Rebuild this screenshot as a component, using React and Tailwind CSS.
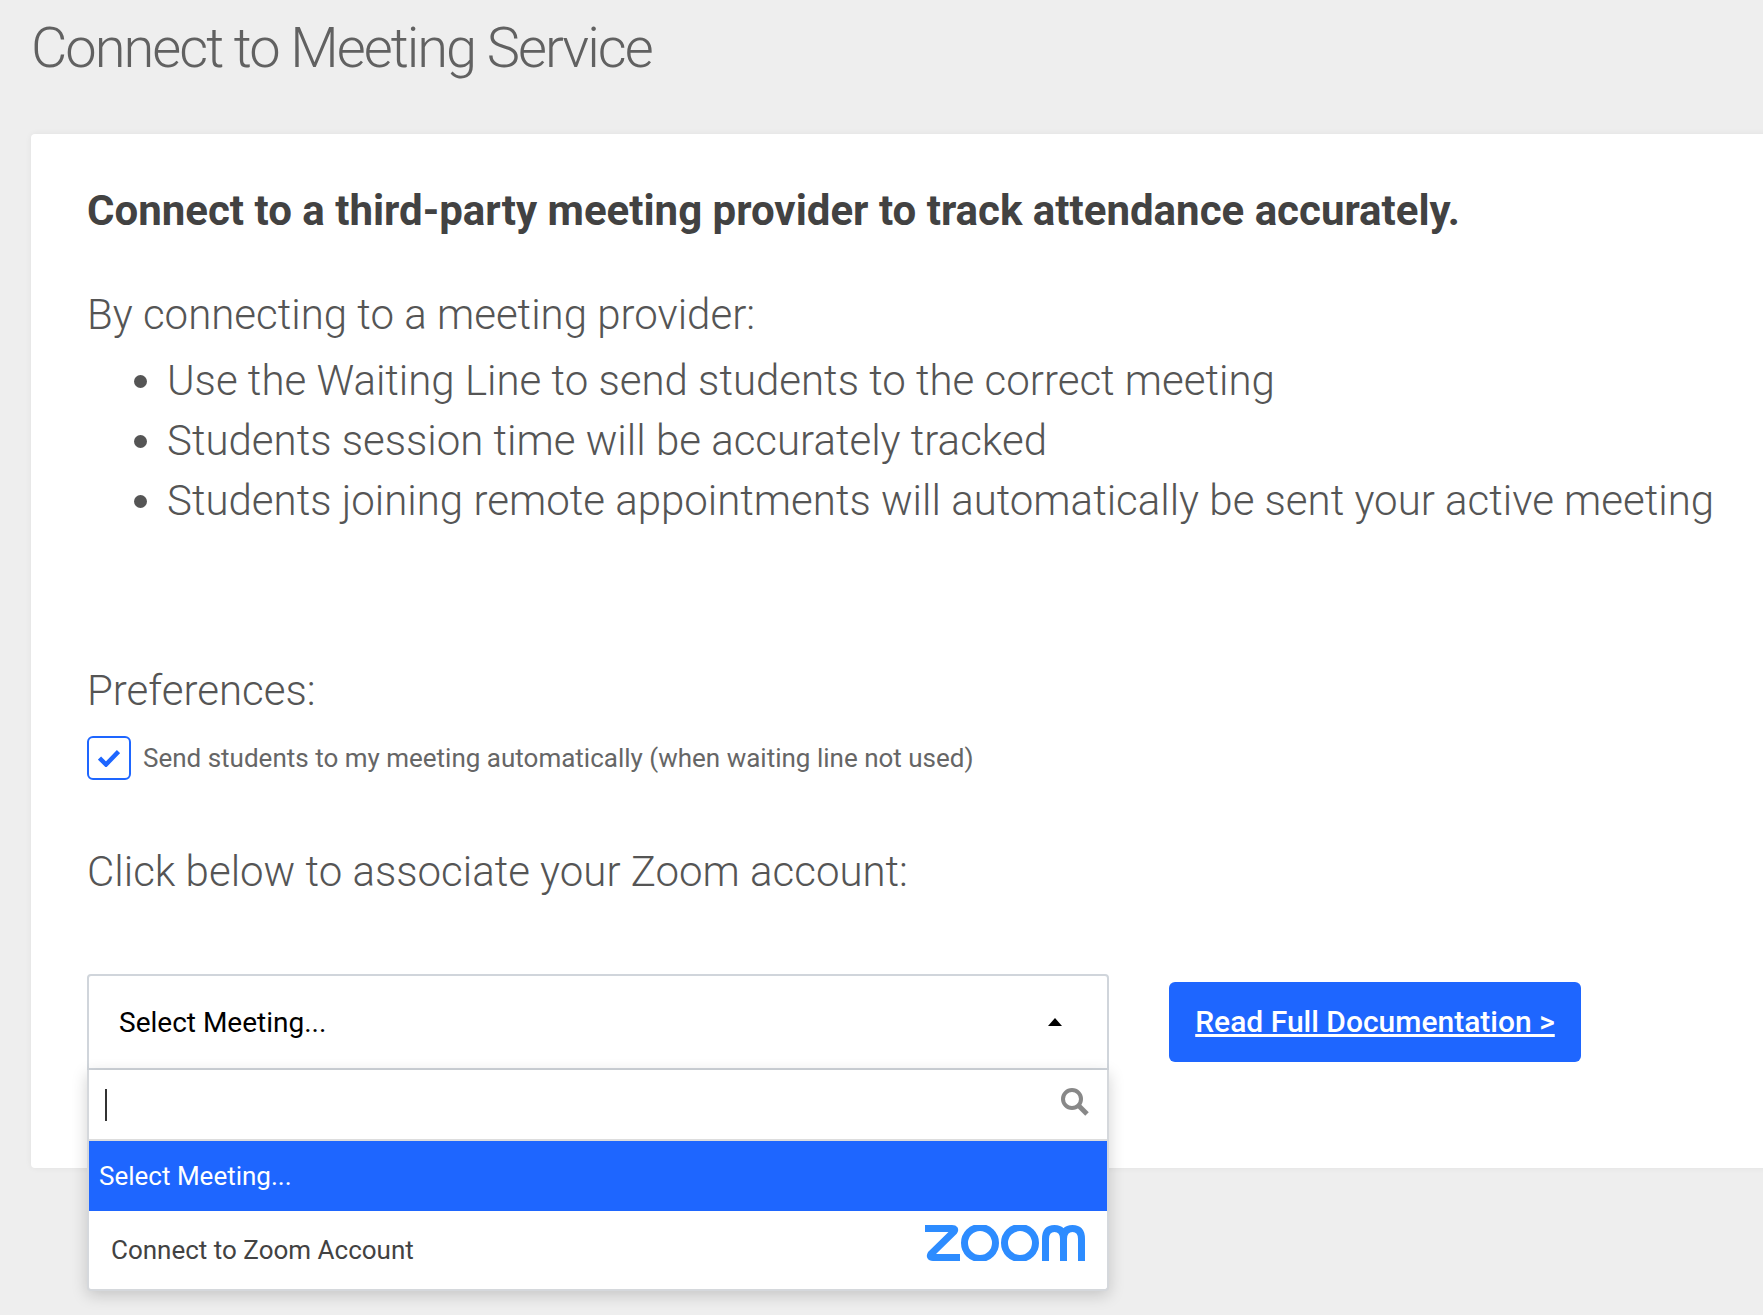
export default function App() {
  const items = [
    "Use the Waiting Line to send students to the correct meeting",
    "Students session time will be accurately tracked",
    "Students joining remote appointments will automatically be sent your active meeting",
  ];
  return (
    <div className="h-[1315px] w-full overflow-hidden bg-[#eeeeee] font-['Roboto',sans-serif] pl-[31px]">
      <h1 className="m-0 h-[134px] pt-[14px] text-[56px] leading-[68px] font-light tracking-[-2px] text-[#616161]">Connect to Meeting Service</h1>
      <div className="relative h-[1034px] w-[1800px] rounded-l-[4px] bg-white pl-14 pt-[52px] shadow-[0_0_6px_rgba(0,0,0,0.06)]">
        <h2 className="m-0 text-[42px] leading-[50px] font-bold text-[#424242]">Connect to a third-party meeting provider to track attendance accurately.</h2>
        <p className="mt-[49px] text-[42px] leading-[60px] font-light text-[#555555]">By connecting to a meeting provider:</p>
        <ul className="m-0 mt-[6px] list-disc pl-20 text-[42px] leading-[60px] font-light text-[#555555]">
          {items.map((t) => (<li key={t}>{t}</li>))}
        </ul>
        <p className="mt-[130px] text-[42px] leading-[60px] font-light text-[#555555]">Preferences:</p>
        <div className="mt-[15px] flex items-center gap-3">
          <span className="flex h-11 w-11 items-center justify-center rounded-[6px] border-2 border-[#1e66ff]">
            <svg width="22" height="18" viewBox="0 0 22 18" fill="none">
              <path d="M1.500 9l6.500 6.500L20.500 2.500" stroke="#1e66ff" strokeWidth="4.500" />
            </svg>
          </span>
          <span className="text-[26px] leading-[36px] text-[#666666]">Send students to my meeting automatically (when waiting line not used)</span>
        </div>
        <p className="mt-[62px] text-[42px] leading-[60px] font-light text-[#555555]">Click below to associate your Zoom account:</p>
        <div className="mt-[72px] flex items-start gap-[60px]">
          <div className="relative w-[1022px]">
            <div className="flex h-[96px] items-center justify-between rounded-t-[4px] border-2 border-[#d0d5db] bg-white pl-[30px] pr-[45px] text-[28px] text-black">
              <span className="mt-[2px]">Select Meeting...</span>
              <span className="h-0 w-0 border-x-[7px] border-b-[8px] border-x-transparent border-b-black" />
            </div>
            <div className="absolute left-0 top-[96px] z-10 w-full rounded-b-[4px] border-x-2 border-b-2 border-[#d5d8dc] bg-white shadow-[0_4px_16px_rgba(0,0,0,0.18)]">
              <div className="flex h-[71px] items-center justify-between border-b-2 border-[#dddddd] pl-4 pr-[18px]">
                <span className="h-8 w-[2px] bg-[#333333]" />
                <svg className="mb-[5px]" width="28" height="28" viewBox="0 0 28 28" fill="none">
                  <circle cx="11" cy="11" r="9" stroke="#888888" strokeWidth="4" />
                  <path d="M18 18l8 8" stroke="#888888" strokeWidth="5" />
                </svg>
              </div>
              <div className="flex h-[70px] items-center bg-[#1e66ff] pl-[10px] text-[26px] text-white">Select Meeting...</div>
              <div className="flex h-[78px] items-start justify-between pl-[22px] pr-[22px] text-[26px] text-[#424242]">
                <span className="mt-[20px]">Connect to Zoom Account</span>
                <svg className="mt-[14px]" width="160" height="36" viewBox="0 0 160 36" fill="none">
                  <g stroke="#2d8cff" strokeWidth="7">
                    <path d="M0 3.500h27q4 0 2 3L6 29q-2 3.500 2 3.500h27" strokeLinejoin="round" />
                    <circle cx="55" cy="18" r="15.500" />
                    <circle cx="95" cy="18" r="15.500" />
                    <path d="M120.500 36V14q0-10.500 9-10.500t9 10.500v22M138.500 14q0-10.500 9-10.500t9 10.500v22" />
                  </g>
                </svg>
              </div>
            </div>
          </div>
          <a href="#" className="mt-2 flex h-20 w-[412px] items-center justify-center rounded-[6px] bg-[#1e66ff] pb-[2px] text-[30px] font-medium text-white underline">Read Full Documentation &gt;</a>
        </div>
      </div>
    </div>
  );
}
